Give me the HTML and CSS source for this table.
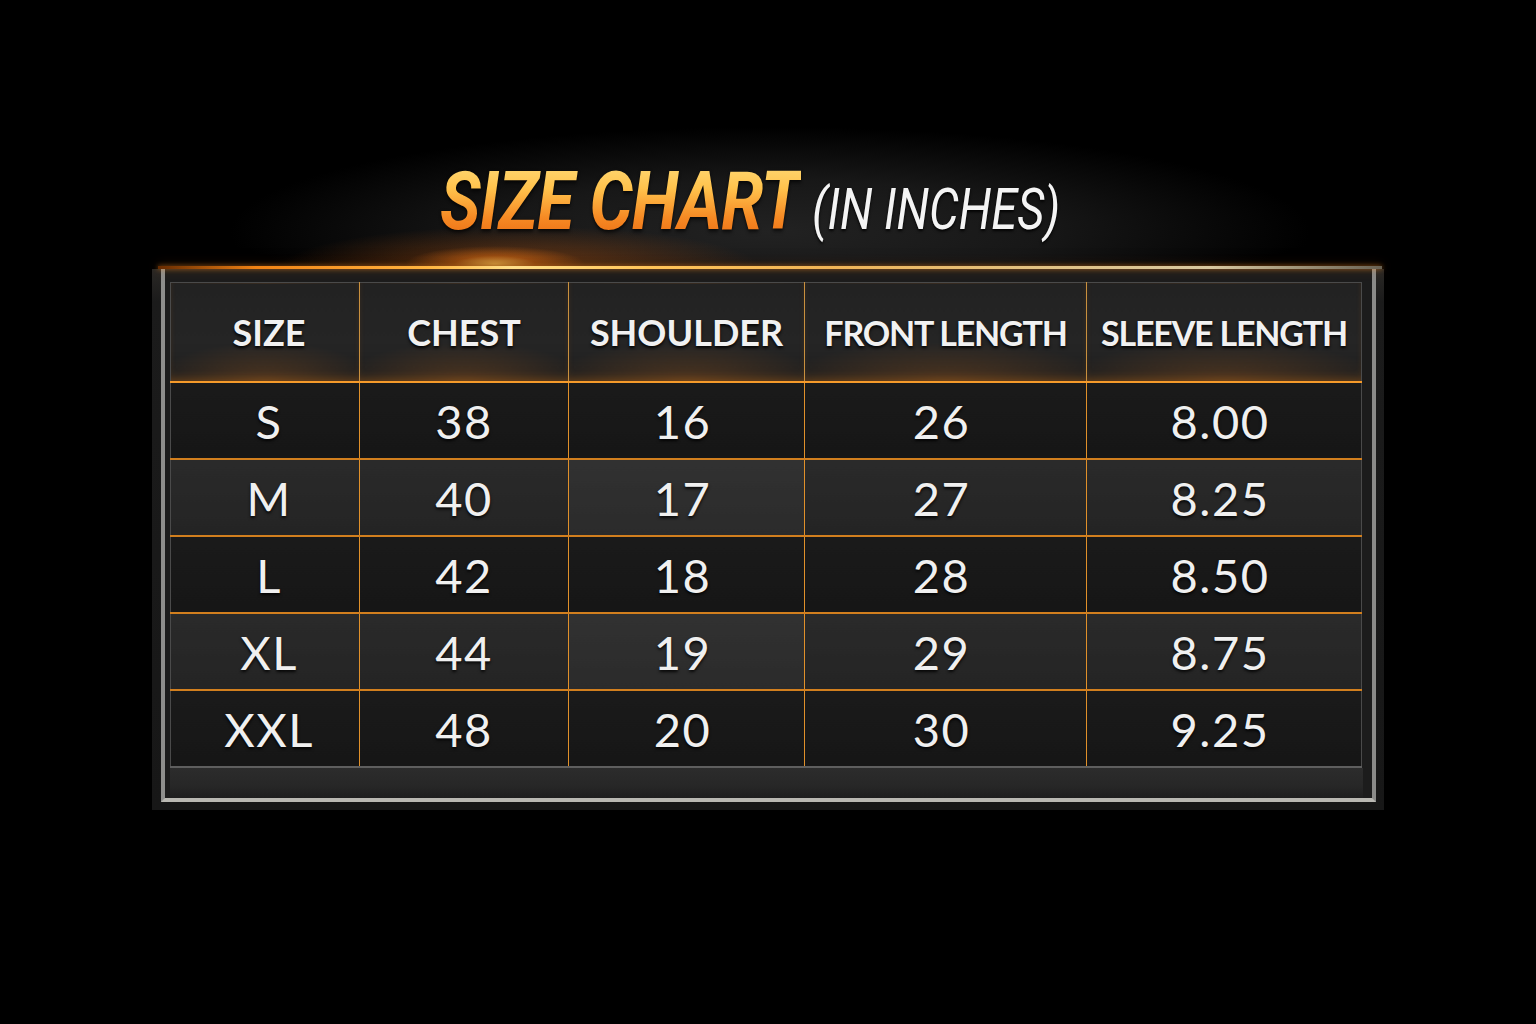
FILE: index.html
```html
<!DOCTYPE html>
<html lang="en">
<head>
<meta charset="utf-8">
<title>Size Chart</title>
<link rel="stylesheet" href="styles.css">
</head>
<body>
<div class="page">
  <header class="title-wrap">
    <h1 class="title">
      <span class="title-main"><span class="title-main-text">SIZE CHART</span></span>
      <span class="title-sub"><span class="title-sub-text">(IN INCHES)</span></span>
    </h1>
  </header>
  <div class="glow-line"></div>
  <section class="frame">
    <div class="bezel">
      <table class="chart">
        <colgroup>
          <col class="c1"><col class="c2"><col class="c3"><col class="c4"><col class="c5">
        </colgroup>
        <thead>
          <tr><th>SIZE</th><th>CHEST</th><th>SHOULDER</th><th class="tight">FRONT LENGTH</th><th class="tight">SLEEVE LENGTH</th></tr>
        </thead>
        <tbody>
          <tr class="dark"><td>S</td><td>38</td><td>16</td><td>26</td><td>8.00</td></tr>
          <tr class="light"><td>M</td><td>40</td><td>17</td><td>27</td><td>8.25</td></tr>
          <tr class="dark"><td>L</td><td>42</td><td>18</td><td>28</td><td>8.50</td></tr>
          <tr class="light"><td>XL</td><td>44</td><td>19</td><td>29</td><td>8.75</td></tr>
          <tr class="dark"><td>XXL</td><td>48</td><td>20</td><td>30</td><td>9.25</td></tr>
        </tbody>
      </table>
      <div class="strip"></div>
    </div>
  </section>
</div>
</body>
</html>
```
FILE: styles.css
```css
html, body {
  margin: 0;
  padding: 0;
  background: #000;
}
body {
  width: 1536px;
  height: 1024px;
  overflow: hidden;
  font-family: "Lato", "Open Sans", sans-serif;
  color: #f2f2f2;
}
.page {
  display: flex;
  flex-direction: column;
  width: 1536px;
  height: 1024px;
  background: #000;
}
.title-wrap {
  height: 266px;
  box-sizing: border-box;
  padding-top: 160px;
  padding-left: 440px;
  background:
    radial-gradient(ellipse 90px 18px at 495px 264px, rgba(255,190,80,0.9) 0%, rgba(245,120,20,0.45) 45%, rgba(0,0,0,0) 100%),
    radial-gradient(ellipse 240px 42px at 520px 268px, rgba(215,95,10,0.45) 0%, rgba(0,0,0,0) 100%),
    radial-gradient(ellipse 540px 105px at 770px 232px, rgba(34,34,34,1) 0%, rgba(26,26,26,0.9) 50%, rgba(0,0,0,0) 100%);
}
.title {
  margin: 0;
  display: flex;
  align-items: baseline;
  font-family: "Roboto", "Liberation Sans", sans-serif;
  font-style: italic;
  line-height: 1;
  white-space: nowrap;
}
.title-main {
  display: inline-block;
  width: 360px;
}
.title-main-text {
  display: inline-block;
  font-size: 82px;
  font-weight: 700;
  letter-spacing: -1px;
  transform: scaleX(0.828);
  transform-origin: 0 50%;
  background: linear-gradient(180deg, #ffdc7a 0%, #ffc24c 35%, #f68a24 70%, #ea6a12 100%);
  -webkit-background-clip: text;
  background-clip: text;
  color: transparent;
  filter: drop-shadow(0 2px 2px rgba(0,0,0,0.8));
}
.title-sub {
  display: inline-block;
  width: 246px;
  margin-left: 12px;
}
.title-sub-text {
  display: inline-block;
  font-size: 57px;
  font-weight: 400;
  color: #f4f4f4;
  transform: scaleX(0.825);
  transform-origin: 0 50%;
  text-shadow: 0 2px 3px rgba(0,0,0,0.9);
}
.glow-line {
  position: relative;
  z-index: 2;
  margin-left: 158px;
  width: 1224px;
  height: 3px;
  background: linear-gradient(90deg, rgba(170,70,0,0.6) 0%, #f08214 8%, #ffb540 22%, #ffe08a 29%, #ffc458 40%, #f0b456 55%, #e2c07e 70%, #d8c8a0 86%, rgba(150,140,120,0.7) 100%);
  box-shadow: 0 0 5px rgba(255,150,40,0.6), 0 0 12px rgba(255,120,20,0.25);
}
.frame {
  margin-left: 152px;
  width: 1232px;
  box-sizing: border-box;
  padding: 0 8px 8px 9px;
  background: linear-gradient(180deg, #2a2825 0%, #1b1b1b 6%, #171717 100%);
  box-shadow: 0 0 14px rgba(0,0,0,0.9);
}
.bezel {
  padding: 13px 9px 0 5px;
  border-left: 4px solid #8e8e8c;
  border-right: 4px solid #8a8a88;
  border-bottom: 4px solid #b9b8b2;
  background: #1c1c1c;
}
.chart {
  width: 1192px;
  border-collapse: collapse;
  table-layout: fixed;
  border: 1px solid #4a4a4a;
}
.c1 { width: 189px; }
.c2 { width: 209px; }
.c3 { width: 236px; }
.c4 { width: 282px; }
.c5 { width: 275px; }
.chart th {
  height: 98px;
  padding: 0;
  font-weight: 700;
  font-size: 36px;
  color: #f1f1f1;
  white-space: nowrap;
  text-shadow: 0 2px 3px rgba(0,0,0,0.9);
  border-left: 1px solid #c9903e;
  border-bottom: 2px solid #f59a2a;
  box-shadow: inset 0 -6px 8px -4px rgba(240,130,20,0.3);
  background:
    radial-gradient(ellipse 60% 40% at 50% 100%, rgba(200,110,30,0.28) 0%, rgba(0,0,0,0) 100%),
    linear-gradient(180deg, #222 0%, #252525 60%, #1e1e1e 100%);
}
.chart th.tight {
  letter-spacing: -1.2px;
  font-size: 34px;
}
.chart th:first-child,
.chart td:first-child {
  border-left: none;
  padding-left: 8px;
}
.chart td:nth-child(n+3) {
  padding-right: 8px;
}
.chart td {
  height: 75px;
  padding: 0;
  text-align: center;
  font-size: 47px;
  font-weight: 400;
  letter-spacing: 1.5px;
  color: #f0f0f0;
  text-shadow: 0 2px 3px rgba(0,0,0,0.85);
  border-left: 1px solid #e0902a;
  border-bottom: 2px solid #d27f1e;
}
.chart tbody tr:last-child td { border-bottom: 2px solid #5e5e5e; }
.chart tr.dark td {
  background: linear-gradient(180deg, #1a1a1a 0%, #161616 100%);
}
.chart tr.light td {
  background: linear-gradient(180deg, #2a2a2a 0%, #242424 100%);
}
.chart tr.light td:nth-child(3) {
  background: linear-gradient(180deg, #313131 0%, #2b2b2b 100%);
}
.strip {
  height: 30px;
  background: linear-gradient(180deg, #2c2c2c 0%, #272727 60%, #1e1e1e 100%);
}
```
